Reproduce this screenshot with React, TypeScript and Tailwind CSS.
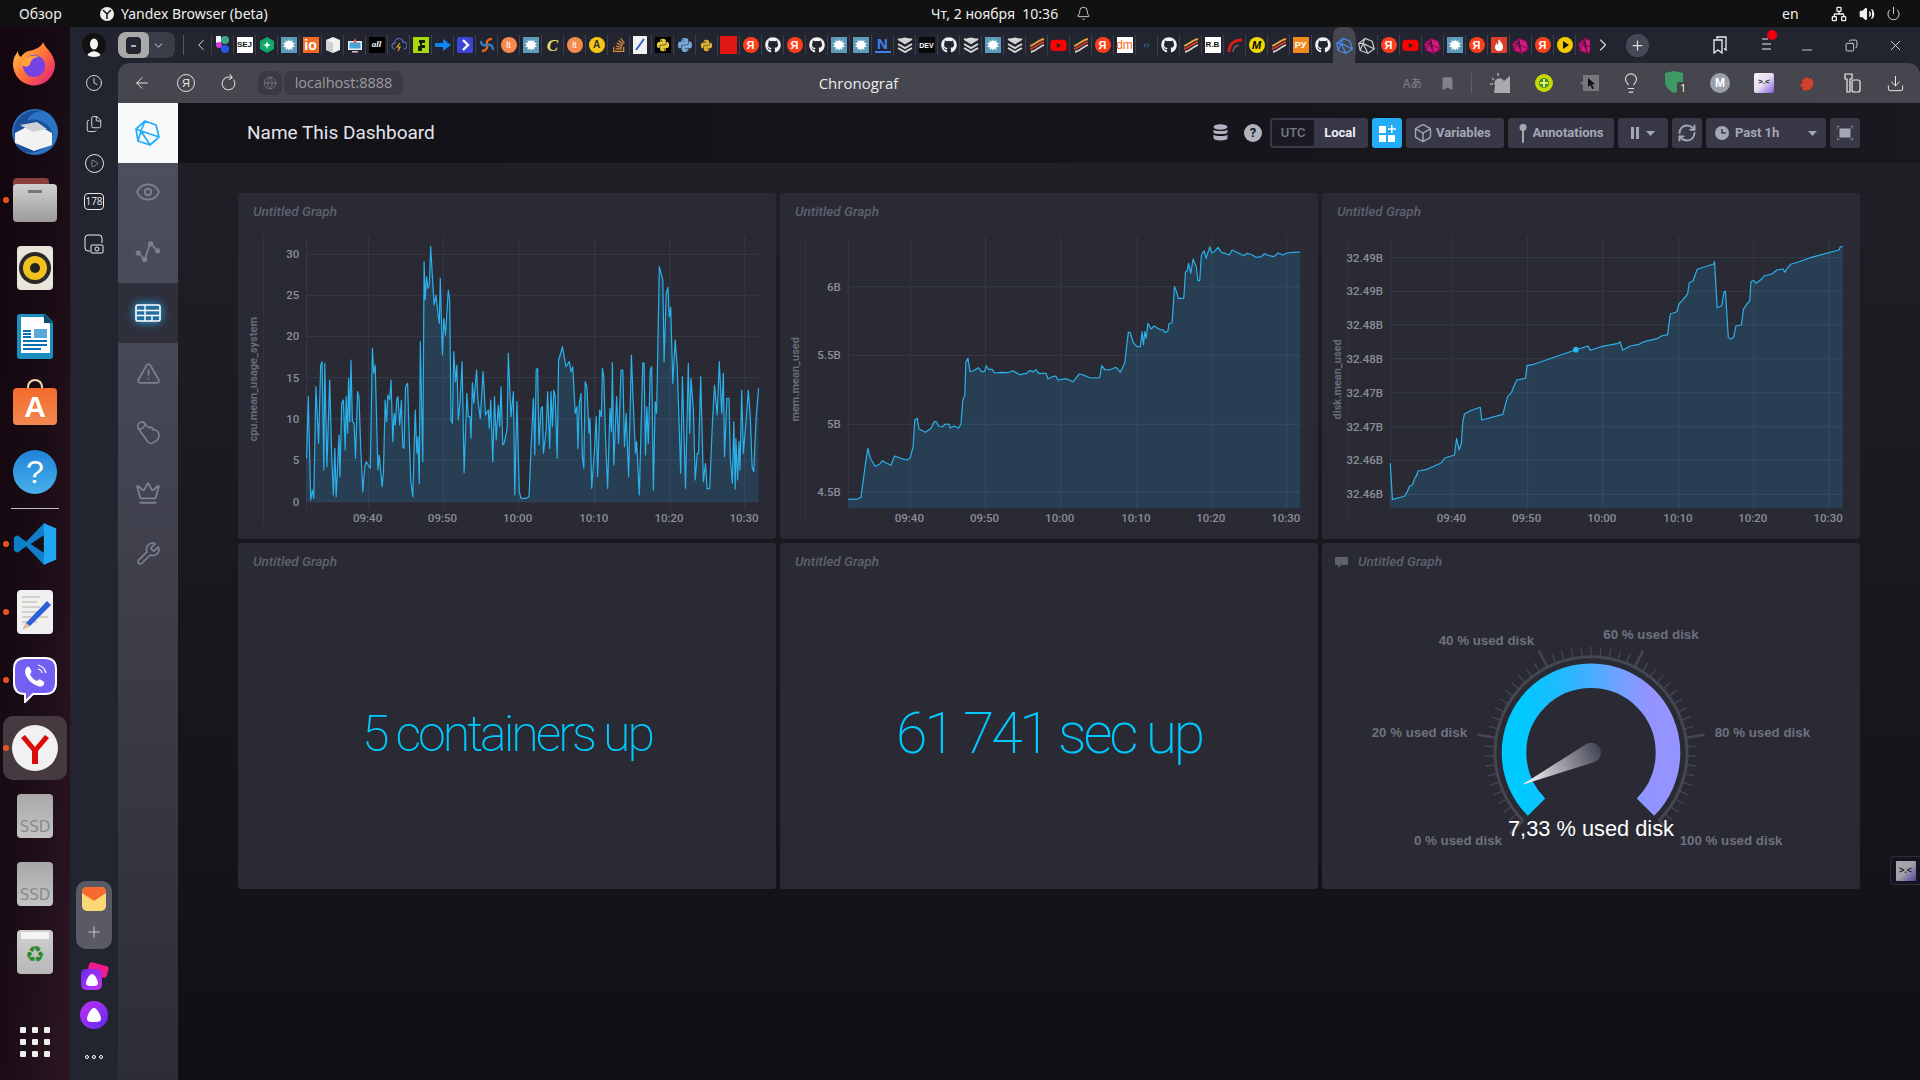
import React from "react";
import { FaGithub, FaYoutube, FaPython, FaStackOverflow } from "react-icons/fa";
import { Clock, Eye, TriangleAlert, Crown, Wrench, Box, RefreshCw, Bell, Volume2, Power, Network, ArrowLeft, RotateCw, Globe, Plus, X, ChevronLeft, ChevronRight, ChevronDown, Bookmark, Download, Minus, Copy, Play, Files, Lightbulb } from "lucide-react";

const cpu = [193,805,198,620,205,930,210,900,214,925,220,590,228,760,234,525,238,515,243,840,246,520,252,830,260,570,266,800,271,915,275,775,279,920,287,735,290,860,295,640,300,630,305,780,308,620,312,730,315,565,318,695,322,510,326,695,331,700,335,805,341,605,345,620,350,770,356,905,362,830,366,815,372,825,378,835,384,475,388,550,392,525,400,840,404,795,412,890,416,850,421,630,425,695,429,615,434,630,438,570,443,755,447,670,450,705,455,625,458,620,463,705,468,630,472,770,476,775,480,590,486,580,490,720,495,870,501,920,508,660,513,790,516,740,520,880,523,455,530,815,534,215,537,330,541,260,545,295,549,285,553,170,558,260,563,345,568,315,575,380,578,400,581,265,587,495,591,385,596,435,604,300,608,330,612,690,616,700,620,485,625,575,629,525,633,690,638,640,644,515,650,848,658,610,662,680,667,680,670,745,674,578,678,640,686,540,690,630,697,685,705,545,712,675,720,660,723,715,727,630,733,815,738,620,743,750,749,645,753,710,757,590,762,765,766,760,775,715,778,490,786,680,793,605,797,915,803,635,810,905,815,925,830,925,838,920,846,730,851,625,855,795,859,540,863,535,867,765,873,655,877,650,880,790,888,720,892,605,898,775,902,605,906,710,910,600,914,620,920,805,924,510,930,490,935,470,945,530,955,515,960,545,965,530,972,670,977,650,980,775,984,640,989,610,993,800,997,835,1001,575,1006,590,1012,730,1015,685,1020,895,1028,780,1033,680,1037,860,1043,660,1048,680,1051,535,1055,560,1060,740,1066,895,1073,655,1077,725,1080,518,1084,825,1092,620,1098,760,1105,540,1110,540,1115,770,1120,670,1127,860,1135,495,1140,630,1147,790,1150,755,1158,915,1168,518,1172,520,1176,795,1180,650,1184,760,1190,540,1194,530,1199,900,1204,635,1208,670,1216,230,1226,270,1230,515,1236,310,1241,292,1245,380,1249,352,1255,580,1262,450,1268,530,1278,850,1283,560,1292,895,1300,520,1304,730,1308,565,1315,660,1320,870,1326,790,1330,790,1336,560,1344,875,1350,820,1355,897,1362,895,1370,700,1376,585,1384,675,1390,515,1397,670,1402,550,1405,800,1412,625,1418,625,1422,805,1428,880,1432,695,1436,897,1438,745,1443,870,1447,755,1450,840,1455,600,1460,790,1470,660,1474,600,1480,680,1485,830,1490,845,1493,770,1497,680,1504,595];
const mem = [198,928,212,927,222,928,235,922,248,820,255,775,262,805,276,829,290,822,297,812,310,820,322,826,332,798,350,805,368,810,378,803,386,770,391,690,398,685,403,717,422,727,438,715,447,695,453,695,460,708,470,711,480,702,490,703,494,714,505,708,518,715,525,702,530,630,536,617,539,515,545,505,551,544,560,543,575,533,585,545,593,545,598,527,604,538,615,538,622,549,640,547,660,548,675,542,695,554,715,550,725,541,733,546,742,539,750,550,772,550,777,567,790,560,800,558,806,570,830,566,850,575,868,552,880,555,900,564,927,563,933,527,943,540,960,538,975,532,987,547,1000,518,1010,427,1015,427,1025,458,1035,470,1045,470,1050,425,1054,465,1058,425,1062,445,1067,400,1076,417,1085,408,1100,418,1112,420,1117,428,1125,423,1128,401,1137,398,1144,290,1150,305,1155,325,1171,325,1176,245,1181,243,1185,220,1191,250,1198,207,1207,230,1212,272,1217,272,1222,195,1230,182,1236,205,1246,170,1252,188,1260,185,1270,172,1280,187,1290,190,1303,195,1311,180,1325,187,1345,197,1355,190,1370,195,1380,202,1395,200,1405,191,1420,197,1432,200,1445,189,1458,195,1470,189,1490,187,1509,186];
const disk = [204,820,210,928,230,923,246,918,253,905,260,888,268,885,276,862,280,858,284,843,310,838,350,820,362,804,390,795,396,745,403,780,410,760,414,695,419,672,436,662,465,652,469,690,530,673,544,620,555,608,560,595,570,570,596,565,600,527,620,523,740,480,778,468,783,481,815,470,865,460,870,455,878,481,900,468,925,463,940,455,980,445,990,438,1008,434,1016,372,1035,365,1041,342,1050,332,1066,312,1071,278,1082,272,1094,238,1142,222,1144,214,1152,353,1165,347,1172,305,1176,304,1184,443,1192,447,1200,440,1206,408,1222,405,1228,358,1238,342,1246,333,1250,275,1258,271,1265,280,1280,268,1287,258,1310,252,1325,240,1343,237,1348,247,1355,235,1365,223,1390,215,1425,202,1505,180,1509,171,1516,169];

type ChartCfg = {
  data: number[]; panelX: number; cropX: number; left: number; right: number; bottom: number;
  axisX: number; vs: number[]; hs: [number, string][]; labelRight: number; yLabel: string; yLabelX: number; yLabelY: number; dot?: [number, number];
};

const TOP = 228;
function Chart({ c }: { c: ChartCfg }) {
  const fx = (z: number) => c.cropX + z / 2.9 - c.panelX;
  const fy = (z: number) => 190 + z / 3 - TOP;
  const pts: string[] = [];
  for (let i = 0; i < c.data.length; i += 2) pts.push(`${fx(c.data[i]).toFixed(1)},${fy(c.data[i + 1]).toFixed(1)}`);
  const line = pts.join(" ");
  const area = `${fx(c.left).toFixed(1)},${fy(c.bottom).toFixed(1)} ${line} ${fx(c.right).toFixed(1)},${fy(c.bottom).toFixed(1)}`;
  const times = ["09:40", "09:50", "10:00", "10:10", "10:20", "10:30"];
  return (
    <svg width="538" height="311" className="block" style={{ fontFamily: "Roboto, sans-serif" }}>
      <line x1={fx(c.axisX)} x2={fx(c.axisX)} y1={fy(130)} y2={fy(1005)} stroke="#32333e" strokeWidth="1" />
      <line x1={fx(c.left)} x2={fx(c.left)} y1={fy(140)} y2={fy(955)} stroke="#383946" strokeWidth="1" />
      {c.vs.map((v) => <line key={v} x1={fx(v)} x2={fx(v)} y1={fy(140)} y2={fy(955)} stroke="#383946" strokeWidth="1" />)}
      {c.hs.map(([y]) => <line key={y} x1={fx(c.left)} x2={fx(c.right)} y1={fy(y)} y2={fy(y)} stroke="#383946" strokeWidth="1" />)}
      <polygon points={area} fill="#22adf6" fillOpacity="0.17" />
      <polyline points={line} fill="none" stroke="#2bb0ea" strokeWidth="1.2" strokeLinejoin="round" />
      {c.dot && <circle cx={fx(c.dot[0])} cy={fy(c.dot[1])} r="2.8" fill="#2bb7f3" />}
      {c.hs.map(([y, t]) => <text key={y} x={fx(c.labelRight)} y={fy(y) + 4} textAnchor="end" fontSize="11.5" fontWeight="500" fill="#8b8d9b">{t}</text>)}
      {c.vs.map((v, i) => <text key={v} x={i === 5 ? fx(c.right) : fx(v) - 1} y={fy(985) + 4} textAnchor={i === 5 ? "end" : "middle"} fontSize="11.5" fontWeight="500" fill="#8b8d9b">{times[i]}</text>)}
      <text transform={`translate(${fx(c.yLabelX) + 1} ${fy(c.yLabelY)}) rotate(-90)`} textAnchor="middle" fontSize="11" fontWeight="700" fill="#686a79">{c.yLabel}</text>
    </svg>
  );
}

function Title({ icon }: { icon?: boolean }) {
  return (
    <div className={`h-[35px] flex items-center pt-[2px] gap-[10px] text-[13.500px] italic font-medium text-[#5f6170] ${icon ? "pl-[13px]" : "pl-[15px]"}`} style={{ fontFamily: "Roboto, sans-serif" }}>
      {icon && <svg width="13" height="12" viewBox="0 0 13 12" fill="#5f6170"><path d="M1 1h11a1 1 0 011 1v6a1 1 0 01-1 1H6l-3 3V9H1a1 1 0 01-1-1V2a1 1 0 011-1z" /></svg>}
      Untitled Graph
    </div>
  );
}

function Gauge() {
  const ox = 1322, oy = 578;
  const gx = 1591 - ox, gy = 752.7 - oy;
  const pol = (r: number, deg: number): [number, number] => [gx + r * Math.cos(deg * Math.PI / 180), gy + r * Math.sin(deg * Math.PI / 180)];
  const arc = (r: number) => {
    const a = pol(r, 135), b = pol(r, 45);
    return `M ${a[0]} ${a[1]} A ${r} ${r} 0 1 1 ${b[0]} ${b[1]}`;
  };
  const ticks = [];
  for (let i = 0; i <= 50; i++) {
    const d = 135 + 5.4 * i;
    const major = i % 10 === 0;
    const a = pol(96, d), b = pol(major ? 115 : 106, d);
    ticks.push(<line key={i} x1={a[0]} y1={a[1]} x2={b[0]} y2={b[1]} stroke="#454653" strokeWidth={major ? 2.6 : 1.3} />);
  }
  const labels: [string, number, number][] = [
    ["0 % used disk", 1414, 840.7], ["20 % used disk", 1371.7, 732.7], ["40 % used disk", 1438.7, 640.3],
    ["60 % used disk", 1603.3, 634], ["80 % used disk", 1714.7, 732.7], ["100 % used disk", 1679.7, 840.7],
  ];
  return (
    <svg width="538" height="311" className="block" style={{ fontFamily: "'Liberation Sans', Arial, sans-serif" }}>
      <defs>
        <linearGradient id="gArc" gradientUnits="userSpaceOnUse" x1={gx - 89} x2={gx + 89} y1="0" y2="0">
          <stop offset="0.12" stopColor="#00c9ff" />
          <stop offset="0.4" stopColor="#2db5ff" />
          <stop offset="0.68" stopColor="#779fff" />
          <stop offset="0.83" stopColor="#9394ff" />
        </linearGradient>
        <linearGradient id="gNeedle" gradientUnits="userSpaceOnUse" x1="-10" x2="76" y1="0" y2="0">
          <stop offset="0" stopColor="#434452" />
          <stop offset="1" stopColor="#ffffff" />
        </linearGradient>
      </defs>
      {ticks}
      <path d={arc(96)} fill="none" stroke="#454653" strokeWidth="3" />
      <path d={arc(77)} fill="none" stroke="url(#gArc)" strokeWidth="24.6" />
      <g transform={`translate(${gx} ${gy}) rotate(155)`}>
        <path d="M 0 -10 L 76 0 L 0 10 A 10 10 0 0 1 0 -10 Z" fill="url(#gNeedle)" />
      </g>
      {labels.map(([t, x, y]) => <text key={t} x={x - ox} y={y - oy + 4.5} fontSize="13.3" fontWeight="700" fill="#6f7180">{t}</text>)}
      <text x={gx} y={836 - oy} textAnchor="middle" fontSize="21.8" fill="#ffffff">7,33 % used disk</text>
    </svg>
  );
}

function Panel({ children }: { children: React.ReactNode }) {
  return <div className="bg-[#292a33] rounded-[3px] h-[346px] overflow-hidden">{children}</div>;
}

function Stat({ text, cls }: { text: string; cls: string }) {
  return (
    <div className="h-[311px] flex items-center justify-center">
      <span className={`${cls} leading-none font-extralight text-[#00c9ff] whitespace-nowrap`} style={{ fontFamily: "Roboto, sans-serif" }}>{text}</span>
    </div>
  );
}

/* ---------- favicons ---------- */
const Sq = ({ c, t, tc = "#fff", s = 8 }: { c: string; t: string; tc?: string; s?: number }) => (
  <span className="flex items-center justify-center w-[16px] h-[16px] font-bold leading-none" style={{ background: c, color: tc, fontSize: s, fontFamily: "'Liberation Sans', sans-serif" }}>{t}</span>
);
const Ya = () => <span className="flex items-center justify-center w-[16px] h-[16px] rounded-full bg-[#fc3f1d] text-white text-[11px] font-bold leading-none" style={{ fontFamily: "'Liberation Sans', sans-serif" }}>Я</span>;
const Splat = () => (
  <svg width="16" height="16" viewBox="0 0 16 16"><rect width="16" height="16" fill="#5c9bba" /><path d="M8 2l1 2.5L11.500 3 11 5.500 14 6l-2 2 2 2-3 .3.500 2.700L9 11.500 8 14l-1-2.500L4.500 13 5 10.300 2 10l2-2-2-2 3-.5L4.500 3 7 4.500z" fill="#fff" /></svg>
);
const Gh = () => <FaGithub size={16} color="#f2f2f2" />;
const Chev = () => (
  <svg width="16" height="16" viewBox="0 0 16 16" fill="none" stroke="#d8d8d8" strokeWidth="2"><path d="M1 2l7 4 7-4M1 7l7 4 7-4M1 11l7 4 7-4" /><path d="M1 2l7-1.500L15 2 8 5z" fill="#d8d8d8" stroke="none" /></svg>
);
const Streak = () => (
  <svg width="16" height="16" viewBox="0 0 16 16" fill="none" strokeWidth="1.800"><path d="M1 9C5 8 9 3 15 2" stroke="#e8a33d" /><path d="M1 12C6 11 10 6 15 5" stroke="#d13a2a" /><path d="M2 15C7 14 11 9 15 8" stroke="#d9d9d9" /></svg>
);
const Poly = ({ c, fill }: { c: string; fill?: boolean }) => (
  <svg width="17" height="17" viewBox="0 0 24 24" fill={fill ? c : "none"} stroke={fill ? "#8c0d56" : c} strokeWidth="1.700" strokeLinejoin="round"><path d="M10 2l10 4 3 11-9 6-11-4L1 9zM10 2L7 9l7 14M7 9l16 8M7 9l-6 0M3 19l4-10" /></svg>
);
const fav: Record<string, React.ReactNode> = {
  kal: <svg width="16" height="18" viewBox="0 0 16 18"><circle cx="10" cy="4" r="4" fill="#3aa88c" /><circle cx="10" cy="13" r="4" fill="#2456e8" /><rect x="1" y="0" width="5" height="7" fill="#f4f4f4" /><circle cx="4" cy="9" r="3" fill="#d83ad8" /></svg>,
  sej: <Sq c="#fff" t="SEJ" tc="#111" s={8} />,
  hex: <svg width="16" height="16" viewBox="0 0 16 16"><path d="M8 0l7 4v8l-7 4-7-4V4z" fill="#0ea86b" /><path d="M8 4l1 3 3 1-3 1-1 3-1-3-3-1 3-1z" fill="#fff" /></svg>,
  splat: <Splat />, io: <Sq c="#f26b21" t="io" s={14} />,
  box: <svg width="16" height="16" viewBox="0 0 16 16"><path d="M8 0l7 3v10l-7 3-7-3V3z" fill="#f1f1f1" /><path d="M8 6v10l-7-3V3z" fill="#cfcfcf" /></svg>,
  mon: <svg width="16" height="16" viewBox="0 0 16 16"><rect x="1" y="4" width="14" height="9" fill="#e8eef2" /><rect x="2.500" y="5.500" width="11" height="6" fill="#4aa3d8" /><path d="M8 1l2 5H6z" fill="#e8674a" /><rect x="5" y="14" width="6" height="1.500" fill="#ccc" /></svg>,
  all: <span className="flex items-center justify-center w-[16px] h-[16px] bg-black text-white text-[9px] font-bold italic" style={{ fontFamily: "'Liberation Serif', serif" }}>all</span>,
  cloud: <svg width="16" height="16" viewBox="0 0 16 16" fill="none"><path d="M4 12a3 3 0 010-6 4 4 0 018-1 3.500 3.500 0 011 7" stroke="#4c6ba8" strokeWidth="1.300" /><path d="M9 6l-3 4h3l-2 4" stroke="#e0a830" strokeWidth="1.200" /></svg>,
  lime: <svg width="16" height="16" viewBox="0 0 16 16"><rect width="16" height="16" fill="#a8d810" /><path d="M6 3h6v3H9v2h3v3H9v3H5v-5h2V6H6z" fill="#16210a" /></svg>,
  arrow: <svg width="16" height="16" viewBox="0 0 16 16"><path d="M0 6h8V2l8 6-8 6v-4H0z" fill="#0d84f0" /></svg>,
  chevb: <svg width="16" height="16" viewBox="0 0 16 16"><rect width="16" height="16" rx="2" fill="#3b46d8" /><path d="M6 3l5 5-5 5" fill="none" stroke="#fff" strokeWidth="2.400" /></svg>,
  swirl: <svg width="16" height="16" viewBox="0 0 16 16" fill="none" strokeWidth="2.400"><path d="M8 8C7 4 9 2 13 2" stroke="#e8631c" /><path d="M8 8C12 7 14 9 14 13" stroke="#2b7cc2" /><path d="M8 8C9 12 6 14 3 14" stroke="#e8631c" /><path d="M8 8C4 9 2 7 2 4" stroke="#2b7cc2" /></svg>,
  lt: <span className="flex items-center justify-center w-[16px] h-[16px] rounded-full bg-[#f58a4c] text-white text-[9px] leading-none" style={{ fontFamily: "'Liberation Sans', sans-serif" }}>lt</span>,
  cy: <span className="flex items-center justify-center w-[16px] h-[16px] text-[#e8e060] text-[17px] italic font-bold leading-none" style={{ fontFamily: "'Liberation Serif', serif" }}>C</span>,
  yc: <span className="flex items-center justify-center w-[16px] h-[16px] rounded-full bg-[#f5c518] text-[#332] text-[10px] font-bold leading-none" style={{ fontFamily: "'Liberation Sans', sans-serif" }}>A</span>,
  so: <FaStackOverflow size={16} color="#d8893c" />,
  doc: <svg width="16" height="18" viewBox="0 0 16 18"><rect x="0" y="0" width="14" height="18" fill="#f2f2f2" /><path d="M3 14L11 3" stroke="#3b5fc4" strokeWidth="2" /></svg>,
  pyb: <span className="flex items-center justify-center w-[16px] h-[16px] bg-black"><FaPython size={14} color="#e8c83c" /></span>,
  py: <FaPython size={16} color="#78a9d6" />,
  pys: <FaPython size={13} color="#d8b030" />,
  red: <span className="block w-[17px] h-[18px] bg-[#e01616]" />,
  ya: <Ya />, gh: <Gh />,
  n: <span className="flex flex-col items-center w-[16px] h-[16px] text-[#3f7ff0] text-[15px] font-bold leading-[14px] border-b-[2px] border-[#3f7ff0]" style={{ fontFamily: "'Liberation Sans', sans-serif" }}>N</span>,
  chev: <Chev />, dev: <Sq c="#0a0a0a" t="DEV" s={7} />, streak: <Streak />,
  yt: <FaYoutube size={17} color="#ff0000" />,
  dm: <span className="flex items-center justify-center w-[16px] h-[16px] bg-white"><span className="text-[#f26b21] text-[12px] leading-none" style={{ fontFamily: "'Liberation Sans', sans-serif" }}>dm</span></span>,
  tiny: <span className="text-[#2a6fa8] text-[9px] font-bold leading-none" style={{ fontFamily: "'Liberation Sans', sans-serif" }}>‹›</span>,
  rb: <Sq c="#fff" t="R.B" tc="#111" s={8} />,
  arc: <svg width="16" height="16" viewBox="0 0 16 16" fill="none" strokeWidth="3"><path d="M2 15C2 8 6 3 15 3" stroke="#d81c1c" /><path d="M6 15C6 11 8 9 12 8" stroke="#666" strokeWidth="1.500" /></svg>,
  ym: <span className="flex items-center justify-center w-[16px] h-[16px] rounded-full bg-[#f0d800] text-black text-[11px] font-bold italic leading-none" style={{ fontFamily: "'Liberation Sans', sans-serif" }}>M</span>,
  ru: <Sq c="#f08a20" t="РУ" s={9} />,
  blue: <Poly c="#4a8df0" />, white: <Poly c="#c8c8c8" />, mag: <Poly c="#d01a80" fill />,
  flame: <svg width="16" height="16" viewBox="0 0 16 16"><rect width="16" height="16" fill="#d8402c" /><path d="M8 2c1 3 4 4 4 8a4 4 0 01-8 0c0-2 1-3 2-4 0 1 .500 2 1 2 .500-2 0-4 1-6z" fill="#fff" /></svg>,
  yplay: <svg width="16" height="16" viewBox="0 0 16 16"><circle cx="8" cy="8" r="8" fill="#f5c800" /><path d="M6 4l6 4-6 4z" fill="#111" /></svg>,
};
const tabs = "kal sej hex splat io box mon all cloud lime arrow chevb swirl lt splat cy lt yc so doc pyb py pys red ya gh ya gh splat splat n chev dev gh chev splat chev streak yt streak ya dm tiny gh streak rb arc ym streak ru gh blue white ya yt mag splat ya flame mag ya yplay mag".split(" ");

function TabStrip() {
  return (
    <div className="h-[36px] bg-[#22252f] flex items-center shrink-0 relative">
      <div className="w-[48px] flex justify-center">
        <div className="w-[24px] h-[24px] rounded-full bg-[#111] flex items-end justify-center overflow-hidden">
          <svg width="16" height="20" viewBox="0 0 16 20"><ellipse cx="8" cy="7" rx="4" ry="5.500" fill="#f4f4f4" /><path d="M1 20c0-4 4-5 7-6 3 1 7 2 7 6z" fill="#f4f4f4" /></svg>
        </div>
      </div>
      <div className="w-[57px] h-[26px] rounded-[8px] bg-[#3a3d47] flex items-center overflow-hidden">
        <div className="w-[31px] h-[26px] rounded-[6px] bg-[#a9a9a9] flex items-center justify-center">
          <span className="w-[15px] h-[17px] rounded-[4px] bg-[#22252f] text-white text-[7px] font-bold leading-[17px] text-center">∞</span>
        </div>
        <ChevronDown size={13} className="text-[#a0a2a8] ml-[3px]" />
      </div>
      <div className="w-[1px] h-[20px] bg-[#555863] ml-[8px]" />
      <ChevronLeft size={18} strokeWidth={1.3} className="text-[#ddd] ml-[8px] mr-[1px]" />
      <div className="flex items-center h-[36px] w-[1379px] overflow-hidden">
        {tabs.map((k, i) => (
          <div key={i} className={k === "blue" ? "w-[22px] h-[36px] shrink-0 flex items-center justify-center bg-[#46464f] rounded-t-[8px]" : "w-[22px] h-[20px] shrink-0 flex items-center justify-center border-l border-[#3c3f4a] overflow-hidden"}>
            {fav[k]}
          </div>
        ))}
      </div>
      <ChevronRight size={20} strokeWidth={1.3} className="text-[#ddd] ml-[3px]" />
      <div className="w-[23px] h-[23px] rounded-full bg-[#464955] flex items-center justify-center ml-[13px]"><Plus size={15} className="text-[#ddd]" /></div>
      <svg width="16" height="18" viewBox="0 0 16 18" fill="none" stroke="#eee" strokeWidth="1.300" className="ml-[63px]"><path d="M5 3V1h9v13l-2-1.500" /><path d="M2 4h8v13l-4-3-4 3z" /></svg>
      <div className="ml-[34px] relative w-[16px] h-[16px]">
        <svg width="12" height="14" viewBox="0 0 12 14" stroke="#eee" strokeWidth="1.200"><path d="M0 2h6M0 7h9M0 12h9" /></svg>
        <span className="absolute top-[-7px] left-[5px] w-[10px] h-[10px] rounded-full bg-[#f0000f]" />
      </div>
      <Minus size={16} strokeWidth={1.2} className="text-[#eee] ml-[21px] mt-[10px]" />
      <Copy size={13} strokeWidth={1.5} className="text-[#eee] ml-[30px] -scale-x-100" />
      <X size={17} strokeWidth={1.2} className="text-[#eee] ml-[29px]" />
    </div>
  );
}

/* ---------- dock ---------- */
function Slot({ dot, active, children }: { dot?: boolean; active?: boolean; children: React.ReactNode }) {
  return (
    <div className="relative h-[68px] flex items-center justify-center shrink-0">
      {active && <span className="absolute left-[3px] top-[2px] w-[64px] h-[64px] rounded-[10px] bg-[#453a40]" />}
      {dot && <span className="absolute left-[3px] top-[31px] w-[6px] h-[6px] rounded-full bg-[#e95420] z-10" />}
      <div className="relative flex items-center justify-center">{children}</div>
    </div>
  );
}
const Tile = ({ children, c = "bg-[#ededed]" }: { children?: React.ReactNode; c?: string }) => (
  <div className={`w-[36px] h-[44px] rounded-[4px] flex items-center justify-center overflow-hidden ${c}`}>{children}</div>
);
function Dock() {
  return (
    <div className="w-[70px] shrink-0 bg-gradient-to-br from-[#13060e] via-[#1a0c15] to-[#2c1622] flex flex-col pt-[3px]">
      <Slot>
        <svg width="44" height="44" viewBox="0 0 44 44"><defs><linearGradient id="ff" x1="0" y1="0" x2="1" y2="1"><stop offset="0" stopColor="#ffd33d" /><stop offset="0.5" stopColor="#ff7139" /><stop offset="1" stopColor="#e31587" /></linearGradient></defs><path d="M30 0c2 6 11 11 12 22a21 21 0 11-41-6c1-3 3-5 4-7 0 3 1 5 3 6 3-5 7-6 12-7 5-2 9-4 10-8z" fill="url(#ff)" /><circle cx="21" cy="24" r="11" fill="#7542e5" /><path d="M8 22c3-8 12-10 18-7-5 0-8 3-9 7-2 4-5 3-9 0z" fill="#ffa436" /></svg>
      </Slot>
      <Slot>
        <svg width="50" height="50" viewBox="0 0 50 50"><circle cx="25" cy="25" r="23" fill="#2a75c4" /><path d="M4 28C2 12 16 1 32 4c-8 1-14 5-15 10 8-4 20 0 26 12-3 14-15 22-28 19C8 42 5 36 4 28z" fill="#1b4f9a" /><path d="M5 26l19-10 18 10v12L24 44 5 36z" fill="#f2f2f2" /><path d="M10 18l13 7 14-3-10-7z" fill="#cfcfd8" /></svg>
      </Slot>
      <Slot dot>
        <div className="w-[44px] h-[44px] relative">
          <div className="h-[16px] w-[36px] rounded-t-[4px] bg-[#8a3f3a]" />
          <div className="absolute inset-x-0 bottom-0 h-[38px] rounded-[4px] bg-gradient-to-b from-[#d0d0d0] to-[#9c9c9c] flex justify-center"><span className="mt-[6px] w-[14px] h-[3px] bg-[#777]" /></div>
        </div>
      </Slot>
      <Slot>
        <div className="w-[36px] h-[44px] rounded-[4px] bg-[#e9e5da] flex items-center justify-center">
          <div className="w-[32px] h-[32px] rounded-full bg-[#2a2a2c] flex items-center justify-center"><div className="w-[24px] h-[24px] rounded-full bg-[#f1c21d] flex items-center justify-center"><div className="w-[10px] h-[10px] rounded-full bg-[#222] " /></div></div>
        </div>
      </Slot>
      <Slot>
        <svg width="36" height="45" viewBox="0 0 36 45"><path d="M3 0h25l8 8v34a3 3 0 01-3 3H3a3 3 0 01-3-3V3a3 3 0 013-3z" fill="#1c8ec0" /><path d="M4 3h22l7 7v29H4z" fill="#fff" /><path d="M27 0l9 9h-9z" fill="#0a4d6e" /><path d="M6 17h8M6 20h8M6 23h8M6 27h24M6 31h24M6 35h18" stroke="#0a6fb0" strokeWidth="1.800" /><rect x="17" y="15" width="13" height="9" fill="#5ba7d9" /></svg>
      </Slot>
      <Slot>
        <div className="relative w-[44px] h-[46px] mb-[4px]">
          <div className="absolute left-[14px] top-0 w-[16px] h-[12px] rounded-t-full border-2 border-b-0 border-[#f5d6a8]" />
          <div className="absolute inset-x-0 bottom-0 h-[37px] rounded-[4px] bg-gradient-to-b from-[#f26a2a] to-[#f38850] flex items-center justify-center">
            <span className="text-white text-[30px] font-bold leading-none" style={{ fontFamily: "'Liberation Sans', sans-serif" }}>A</span>
          </div>
        </div>
      </Slot>
      <Slot>
        <div className="w-[44px] h-[44px] rounded-full bg-gradient-to-b from-[#1f83d8] to-[#48b0ea] flex items-center justify-center text-white text-[32px] leading-none" style={{ fontFamily: "'Liberation Sans', sans-serif" }}>?</div>
      </Slot>
      <div className="h-[4px] flex items-center justify-center shrink-0"><span className="block w-[48px] h-[1px] bg-[#bdbdbd]" /></div>
      <Slot dot>
        <svg width="44" height="44" viewBox="0 0 100 100"><path d="M70 3L30 45 10 30 2 35v30l8 5 20-15 40 42 28-12V15z" fill="#0f7fcc" /><path d="M70 3l28 12v70L70 97z" fill="#22a7f2" /><path d="M70 30L40 50l30 20z" fill="#1a0c15" /></svg>
      </Slot>
      <Slot dot>
        <div className="w-[36px] h-[44px] rounded-[4px] bg-[#f0f0f0] flex items-center justify-center">
          <svg width="32" height="38" viewBox="0 0 32 38"><path d="M3 4h18M3 9h15M3 14h18M3 19h15M3 24h26M3 29h15" stroke="#c9c6b9" strokeWidth="1.500" /><path d="M28 8L7 30l-3 6 7-3 21-21z" fill="#2d5fd8" /><path d="M7 30l-3 6 7-3z" fill="#f4c08a" /></svg>
        </div>
      </Slot>
      <Slot dot>
        <svg width="44" height="46" viewBox="0 0 44 46"><path d="M12 1h20c7 0 11 4 11 11v14c0 7-4 11-11 11H20l-8 8v-8c-7 0-11-4-11-11V12C1 5 5 1 12 1z" fill="#7360f2" stroke="#fff" strokeWidth="2" /><path d="M14 10c2-1 3 1 4 3s0 3-1 4c1 3 4 6 7 7 1-1 2-2 4-1s4 2 3 4c-1 3-4 3-6 2-7-2-12-8-13-14 0-2 1-4 2-5z" fill="#fff" /><path d="M25 8c4 1 7 4 8 8M25 12c2 .500 4 2 4 4" stroke="#fff" fill="none" strokeWidth="1.200" /></svg>
      </Slot>
      <Slot dot active>
        <svg width="46" height="46" viewBox="0 0 46 46"><circle cx="23" cy="23" r="23" fill="#f1f1f1" /><path d="M9 13l4-3 10 12 10-12 4 3-11 13v13h-6V26z" fill="#d90b0b" /></svg>
      </Slot>
      {[0, 1].map((i) => (
        <Slot key={i}>
          <Tile c="bg-gradient-to-b from-[#a8a8a8] to-[#c4c4c4]">
            <span className="self-end text-[#8a8a8a] text-[15px] leading-[22px]" style={{ fontFamily: "'DejaVu Sans', sans-serif" }}>SSD</span>
          </Tile>
        </Slot>
      ))}
      <Slot>
        <div className="w-[36px] h-[44px] rounded-[4px] bg-gradient-to-b from-[#cfcfcf] to-[#b8b8b8] flex flex-col items-center">
          <div className="w-[28px] h-[7px] mt-[2px] bg-[#f4f4f4]" />
          <span className="text-[#2a8a2a] text-[22px] leading-[28px] mt-[2px]" style={{ fontFamily: "'DejaVu Sans', sans-serif" }}>♻</span>
        </div>
      </Slot>
      <div className="mt-auto mb-[23px] mx-auto grid grid-cols-3 gap-[6px] w-[30px]">
        {Array.from({ length: 9 }).map((_, i) => <span key={i} className="w-[6px] h-[6px] rounded-[1px] bg-[#eeeeee]" />)}
      </div>
    </div>
  );
}

function Rail() {
  return (
    <div className="w-[48px] shrink-0 bg-[#22252f] flex flex-col items-center text-[#e8e8e8]">
      <Clock size={18} strokeWidth={1.2} className="mt-[11px]" />
      <Files size={18} strokeWidth={1.2} className="mt-[23px]" />
      <div className="mt-[21px] w-[19px] h-[19px] rounded-full border border-[#e8e8e8] flex items-center justify-center"><Play size={9} strokeWidth={1.3} /></div>
      <div className="mt-[20px] w-[20px] h-[17px] rounded-[4px] border border-[#e8e8e8] text-[10px] leading-[15px] text-center" style={{ fontFamily: "'Open Sans', sans-serif" }}>178</div>
      <svg width="20" height="20" viewBox="0 0 20 20" fill="none" stroke="#eee" strokeWidth="1" className="mt-[24px]"><path d="M6 17H4a3 3 0 01-3-3V4a3 3 0 013-3h11a3 3 0 013 3v5" /><rect x="7" y="11" width="12" height="8" rx="1" /><circle cx="13" cy="15" r="2" /></svg>
      <div className="mt-auto w-[36px] h-[68px] rounded-[10px] bg-[#595a63] flex flex-col items-center pt-[6px] mb-[15px]">
        <svg width="24" height="24" viewBox="0 0 24 24"><rect width="24" height="24" rx="5" fill="#fcd775" /><path d="M0 5a5 5 0 015-5h14a5 5 0 015 5v1l-12 8L0 6z" fill="#f76a2e" /></svg>
        <Plus size={18} strokeWidth={1} className="mt-[12px]" />
      </div>
      <div className="relative w-[24px] h-[26px] mb-[11px] mr-[2px]">
        <span className="absolute right-[-3px] top-0 w-[20px] h-[12px] rounded-[3px] rotate-[15deg] bg-[#f01a8c]" />
        <span className="absolute left-0 bottom-0 w-[21px] h-[21px] rounded-[5px] bg-gradient-to-br from-[#6a28f0] to-[#c82cf0] flex items-center justify-center"><svg width="12" height="12" viewBox="0 0 12 12"><path d="M6 0c3 0 6 7 6 9 0 3-3 3-6 3s-6 0-6-3c0-2 3-9 6-9z" fill="#fff" /></svg></span>
      </div>
      <div className="w-[28px] h-[28px] rounded-full bg-gradient-to-br from-[#c02cf0] to-[#6022f5] flex items-center justify-center mb-[26px]"><svg width="14" height="14" viewBox="0 0 12 12"><path d="M6 0c3 0 6 7 6 9 0 3-3 3-6 3s-6 0-6-3c0-2 3-9 6-9z" fill="#fff" /></svg></div>
      <div className="flex gap-[3px] mb-[21px]">{[0, 1, 2].map((i) => <span key={i} className="w-[4px] h-[4px] rounded-full border border-white" />)}</div>
    </div>
  );
}

function Toolbar() {
  return (
    <div className="h-[40px] bg-[#46464f] rounded-t-[12px] shrink-0 flex items-center relative text-[#e6e6e6]">
      <ArrowLeft size={18} strokeWidth={1.3} className="ml-[15px]" />
      <span className="ml-[26px] w-[18px] h-[18px] rounded-full border border-[#e0e0e0] flex items-center justify-center text-[11px] leading-none" style={{ fontFamily: "'Liberation Sans', sans-serif" }}>Я</span>
      <RotateCw size={17} strokeWidth={1.3} className="ml-[25px] rotate-[-35deg]" />
      <span className="ml-[21px] w-[24px] h-[24px] rounded-[7px] bg-[#3a3a43] flex items-center justify-center"><Globe size={14} strokeWidth={1} className="text-[#8d8d94]" /></span>
      <span className="ml-[2px] h-[24px] w-[119px] rounded-[7px] bg-[#3a3a43] flex items-center justify-center text-[#9a9aa0] text-[14.500px]" style={{ fontFamily: "'Open Sans', sans-serif" }}>localhost:8888</span>
      <span className="ml-[415px] w-[81px] text-[15px] text-[#ececec] text-center" style={{ fontFamily: "'Open Sans', sans-serif" }}>Chronograf</span>
      <span className="ml-[504px] text-[#82828a] text-[12px] leading-none w-[16px] whitespace-nowrap" style={{ fontFamily: "'Noto Sans CJK JP', sans-serif" }}>Aあ</span>
      <Bookmark size={15} fill="#82828a" className="text-[#82828a] ml-[21px]" />
      <span className="ml-[16px] w-[1px] h-[20px] bg-[#5e5e66]" />
      <svg width="22" height="22" viewBox="0 0 22 22" className="ml-[17px]"><path d="M6 14a5 5 0 019-5l6-5v17H5z" fill="#a9a9ae" /><path d="M1 12h3M3 6l2 2M9 1v3" stroke="#a9a9ae" strokeWidth="1.500" /></svg>
      <svg width="18" height="18" viewBox="0 0 18 18" className="ml-[24px]"><circle cx="9" cy="9" r="9" fill="#c6d800" /><circle cx="9" cy="9" r="5" fill="#3c8a3c" /><path d="M9 5v8M5 9h8" stroke="#e8f060" strokeWidth="2" /></svg>
      <svg width="20" height="20" viewBox="0 0 20 20" className="ml-[27px]"><path d="M3 2h16v16H3V12L0 10l3-2z" fill="#77777e" /><path d="M8 5l7 6-3 .500 2 4-2 .500-1.500-4-2.500 2z" fill="#111" /></svg>
      <Lightbulb size={22} strokeWidth={1.2} className="ml-[20px] text-[#ddd]" />
      <div className="ml-[23px] relative w-[24px] h-[24px]">
        <svg width="20" height="22" viewBox="0 0 20 22"><path d="M0 2l9-2 9 2v9c0 5-5 9-9 11-4-2-9-6-9-11z" fill="#3d9a64" /></svg>
        <span className="absolute right-0 bottom-0 w-[12px] h-[13px] rounded-[2px] bg-[#444] text-white text-[10px] leading-[13px] text-center" style={{ fontFamily: "'Open Sans', sans-serif" }}>1</span>
      </div>
      <span className="ml-[21px] w-[20px] h-[20px] rounded-full bg-[#9aa0aa] text-white text-[12px] font-bold leading-[20px] text-center" style={{ fontFamily: "'Liberation Sans', sans-serif" }}>M</span>
      <span className="ml-[24px] w-[20px] h-[20px] rounded-[2px] bg-gradient-to-br from-[#f4f4f8] via-[#e4dcf0] to-[#8a58d8] text-[#222] text-[8px] leading-[18px] text-center font-bold" style={{ fontFamily: "'Liberation Sans', sans-serif" }}>&gt;.&lt;</span>
      <svg width="20" height="20" viewBox="0 0 20 20" className="ml-[23px]"><ellipse cx="10" cy="11" rx="6" ry="7" transform="rotate(35 10 11)" fill="#d0402a" /><path d="M14 3l-2 3M3 9l3 1M3 16l3-2M11 19l0-2" stroke="#333" /></svg>
      <svg width="18" height="22" viewBox="0 0 18 22" fill="none" stroke="#eee" strokeWidth="1.200" className="ml-[26px]"><path d="M2 2h7v5H7v13H4V7H2z" /><rect x="9" y="8" width="8" height="12" rx="2" /></svg>
      <Download size={19} strokeWidth={1.2} className="ml-[25px] text-[#eee]" />
    </div>
  );
}

const navIcon = "text-[#7f808e]";
function NavItem({ children, active, white }: { children: React.ReactNode; active?: boolean; white?: boolean }) {
  return <div className={`h-[60px] flex items-center justify-center ${active ? "bg-[#2e2f3b]" : ""} ${white ? "bg-[#f8f9fb]" : ""}`}>{children}</div>;
}
function ChronoNav() {
  return (
    <div className="w-[60px] shrink-0 bg-gradient-to-b from-[#50515f] to-[#2d2d38] flex flex-col">
      <NavItem white>
        <svg width="26" height="28" viewBox="0 0 26 28" fill="none" stroke="#22adf6" strokeWidth="1.700" strokeLinejoin="round"><path d="M10 2l11 4 3 12-9 8-12-4L1 10zM10 2L6 12l9 14M6 12l18 6M6 12l-5-2M3 22l3-10M21 6l-11-4" /></svg>
      </NavItem>
      <NavItem><Eye size={26} strokeWidth={1.7} className={`${navIcon} -mt-[2px]`} /></NavItem>
      <NavItem>
        <svg width="26" height="26" viewBox="0 0 24 24" fill="none" stroke="#7f808e" strokeWidth="1.600"><path d="M3 12l6 6 5-15 7 7" /><g fill="#7f808e" stroke="none"><circle cx="3" cy="12" r="2.400" /><circle cx="9" cy="18" r="2.400" /><circle cx="14.500" cy="3.500" r="2.400" /><circle cx="21" cy="10" r="2.400" /></g></svg>
      </NavItem>
      <NavItem active>
        <svg width="26" height="18" viewBox="0 0 26 18" style={{ filter: "drop-shadow(0 0 5px #22adf6)" }}><rect x="1" y="1" width="24" height="16" rx="1.500" fill="#226f9f" stroke="#fff" strokeWidth="1.600" /><path d="M1 6.500h24M1 11.500h24M10 6.500V17M17 11.500V17M10 1v5.500" stroke="#fff" strokeWidth="1.400" /></svg>
      </NavItem>
      <NavItem><TriangleAlert size={25} strokeWidth={1.7} className={navIcon} /></NavItem>
      <NavItem>
        <svg width="24" height="24" viewBox="0 0 24 24" fill="none" stroke="#7f808e" strokeWidth="1.600" strokeLinejoin="round"><path d="M2 7C1 5 2 2 5 1c2-.5 4 1 5 3l3 3c2-2 4 0 4 2 3-1 6 2 6 5 0 3-2 6-5 7-2 2-4 2-6 0z" /><path d="M3 8c3 0 6-2 6-5" /></svg>
      </NavItem>
      <NavItem><Crown size={26} strokeWidth={1.7} className={navIcon} /></NavItem>
      <NavItem><Wrench size={25} strokeWidth={1.6} className={navIcon} /></NavItem>
    </div>
  );
}

const btn = "h-[30px] rounded-[3px] bg-[#383846] flex items-center justify-center text-[#a4a8b6] text-[13px] font-bold";
function Controls() {
  return (
    <div className="flex items-center gap-[4px] ml-auto mr-[60px]" style={{ fontFamily: "Roboto, sans-serif" }}>
      <svg width="15" height="18" viewBox="0 0 15 18" fill="#b0b2bf" className="mr-[12px]"><ellipse cx="7.500" cy="3" rx="7" ry="2.800" /><path d="M.5 5.500c1 2 13 2 14 0v3c-1 2-13 2-14 0zM.5 10.500c1 2 13 2 14 0v4c-1 2.500-13 2.500-14 0z" /></svg>
      <span className="w-[18px] h-[18px] rounded-full bg-[#b0b2bf] text-[#14141a] text-[13px] font-bold leading-[18px] text-center mr-[4px]">?</span>
      <div className="flex h-[30px] w-[98px] rounded-[3px] bg-[#383846] p-[2px] text-[13px] font-bold">
        <span className="w-[42px] bg-[#1a1a22] rounded-[2px] text-[#767888] leading-[26px] text-center font-medium">UTC</span>
        <span className="flex-1 text-[#eeeef5] leading-[26px] text-center">Local</span>
      </div>
      <div className={`${btn} w-[30px] !bg-[#22adf6]`}>
        <svg width="17" height="17" viewBox="0 0 17 17" fill="#fff"><rect x="0" y="1" width="7" height="7" /><rect x="0" y="10" width="7" height="7" /><rect x="9" y="10" width="7" height="7" /><path d="M12 0h1.500v3.200H17v1.500h-3.500V8H12V4.700H9V3.200h3z" /></svg>
      </div>
      <div className={`${btn} w-[98px] gap-[3px] !justify-start pl-[7px]`}><Box size={20} strokeWidth={1.7} /><span className="pb-[1px]">Variables</span></div>
      <div className={`${btn} w-[106px] gap-[6px]`}>
        <svg width="8" height="20" viewBox="0 0 8 20" fill="#a4a8b6"><circle cx="4" cy="4.500" r="3.500" /><rect x="3" y="6" width="2" height="14" rx="1" /></svg><span className="pb-[1px]">Annotations</span>
      </div>
      <div className={`${btn} w-[50px] gap-[7px]`}>
        <svg width="8" height="12" viewBox="0 0 8 12" fill="#a4a8b6"><rect width="3" height="12" /><rect x="5" width="3" height="12" /></svg>
        <svg width="9" height="5" viewBox="0 0 9 5" fill="#a4a8b6"><path d="M0 0h9L4.500 5z" /></svg>
      </div>
      <div className={`${btn} w-[30px]`}><RefreshCw size={20} strokeWidth={2.300} /></div>
      <div className={`${btn} w-[120px] !justify-start pl-[9px]`}>
        <svg width="14" height="14" viewBox="0 0 14 14"><circle cx="7" cy="7" r="7" fill="#a4a8b6" /><path d="M7 3v4h4" stroke="#383846" strokeWidth="1.500" fill="none" /></svg>
        <span className="ml-[6px] w-[56px] pb-[1px]">Past 1h</span>
        <svg width="9" height="5" viewBox="0 0 9 5" fill="#a4a8b6" className="ml-[17px]"><path d="M0 0h9L4.500 5z" /></svg>
      </div>
      <div className={`${btn} w-[30px]`}>
        <svg width="16" height="14" viewBox="0 0 16 14" fill="none" stroke="#a4a8b6" strokeWidth="1"><path d="M0 3V0h3M13 0h3v3M16 11v3h-3M3 14H0v-3" /><rect x="2.500" y="2.500" width="11" height="9" fill="#a4a8b6" stroke="none" /></svg>
      </div>
    </div>
  );
}

const charts: ChartCfg[] = [
  { data: cpu, panelX: 238, cropX: 240, left: 193, right: 1504, bottom: 935, axisX: 68, vs: [373, 590, 808, 1029, 1247, 1464], hs: [[193, "30"], [316, "25"], [439, "20"], [563, "15"], [687, "10"], [811, "5"], [935, "0"]], labelRight: 172, yLabel: "cpu.mean_usage_system", yLabelX: 47, yLabelY: 568 },
  { data: mem, panelX: 780, cropX: 780, left: 198, right: 1509, bottom: 955, axisX: 74, vs: [378, 596, 814, 1035, 1252, 1470], hs: [[290, "6B"], [496, "5.5B"], [703, "5B"], [907, "4.5B"]], labelRight: 176, yLabel: "mem.mean_used", yLabelX: 53, yLabelY: 568 },
  { data: disk, panelX: 1322, cropX: 1320, left: 204, right: 1516, bottom: 955, axisX: 78, vs: [384, 602, 820, 1041, 1258, 1476], hs: [[203, "32.49B"], [304, "32.49B"], [404, "32.48B"], [506, "32.48B"], [608, "32.47B"], [710, "32.47B"], [811, "32.46B"], [913, "32.46B"]], labelRight: 183, yLabel: "disk.mean_used", yLabelX: 58, yLabelY: 568, dot: [742, 479] },
];

export default function App() {
  return (
    <div className="w-[1920px] h-[1080px] overflow-hidden flex flex-col bg-[#111]" style={{ fontFamily: "'Noto Sans', sans-serif" }}>
      <div className="h-[27px] shrink-0 bg-[#111111] flex items-center relative text-[#eeeeee] text-[14px]">
        <span className="ml-[19px] w-[81px]">Обзор</span>
        <svg width="14" height="14" viewBox="0 0 14 14"><circle cx="7" cy="7" r="7" fill="#eee" /><path d="M3 3l4 4 4-4M7 7v5" stroke="#111" strokeWidth="1.500" fill="none" /></svg>
        <span className="ml-[7px] w-[148px] whitespace-nowrap">Yandex Browser (beta)</span>
        <span className="ml-[662px] w-[128px] whitespace-nowrap">Чт, 2 ноября&nbsp; 10:36</span>
        <Bell size={15} strokeWidth={1.3} className="ml-[17px]" />
        <span className="ml-[691px] w-[16px]">en</span>
        <Network size={16} className="ml-[33px]" />
        <Volume2 size={16} fill="#eee" className="ml-[12px]" />
        <Power size={15} strokeWidth={1.4} className="ml-[11px]" />
      </div>
      <div className="flex-1 flex min-h-0">
        <Dock />
        <div className="flex-1 flex flex-col min-w-0">
          <TabStrip />
          <div className="flex-1 flex min-h-0">
            <Rail />
            <div className="flex-1 flex flex-col min-w-0 bg-[#22252f]">
              <Toolbar />
              <div className="flex-1 flex min-h-0">
                <ChronoNav />
                <div className="flex-1 flex flex-col min-w-0 bg-gradient-to-b from-[#202128] to-[#101014]">
                  <div className="h-[60px] shrink-0 flex items-center bg-gradient-to-r from-[#111116] to-[#18181e]">
                    <span className="ml-[69px] pt-[1px] text-[19px] text-[#e4e5ec]" style={{ fontFamily: "Roboto, sans-serif" }}>Name This Dashboard</span>
                    <Controls />
                  </div>
                  <div className="relative flex-1">
                    <div className="grid grid-cols-[538px_538px_538px] gap-[4px] pt-[30px] pl-[60px]">
                      {charts.map((c, i) => <Panel key={i}><Title /><Chart c={c} /></Panel>)}
                      <Panel><Title /><Stat text="5 containers up" cls="text-[50px] tracking-[-3px]" /></Panel>
                      <Panel><Title /><Stat text="61 741 sec up" cls="text-[57px] tracking-[-3.2px]" /></Panel>
                      <Panel><Title icon /><Gauge /></Panel>
                    </div>
                    <div className="absolute right-0 top-[693px] w-[30px] h-[29px] rounded-l-[4px] bg-[#15161d] border border-r-0 border-[#2b2e3d] flex items-center justify-center">
                      <span className="w-[20px] h-[20px] rounded-[1px] bg-gradient-to-br from-[#a9a9ae] via-[#a0a0a8] to-[#5a3aa0] text-[#1a1a1e] text-[9px] font-bold leading-[18px] text-center" style={{ fontFamily: "'Liberation Sans', sans-serif" }}>&gt;.&lt;</span>
                    </div>
                  </div>
                </div>
              </div>
            </div>
          </div>
        </div>
      </div>
    </div>
  );
}
